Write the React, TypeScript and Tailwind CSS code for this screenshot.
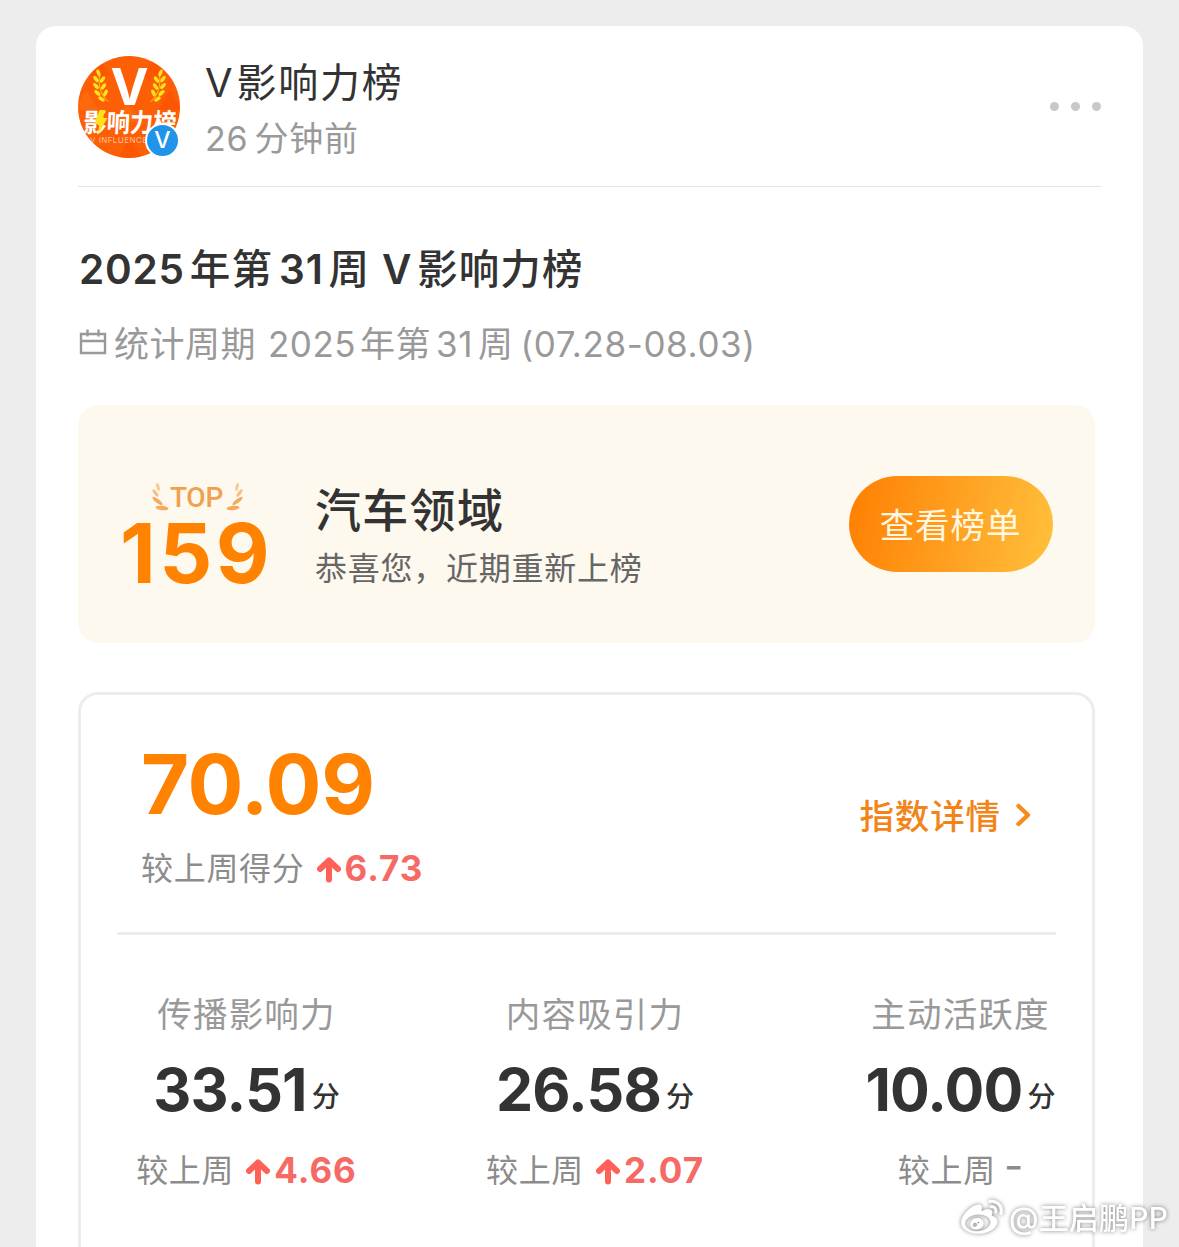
import React from 'react';
import { FaWeibo } from 'react-icons/fa6';

interface Metric {
  label: string;
  value: string;
  change: string | null;
  className: string;
}

const metrics: Metric[] = [
  { label: '传播影响力', value: '33.51', change: '4.66', className: 'w-[261px]' },
  { label: '内容吸引力', value: '26.58', change: '2.07', className: 'w-[436px]' },
  { label: '主动活跃度', value: '10.00', change: null, className: 'w-[295px]' },
];

const leaves = [
  [4, 2, 70],
  [1.5, 8, 55],
  [8, 8.5, 125],
  [1.5, 15, 48],
  [9, 15.5, 125],
  [3, 22, 40],
  [11, 22, 115],
  [7, 28, 35],
];

const Wheat: React.FC<{ transform: string }> = ({ transform }) => (
  <g transform={transform} fill="#ffe21a">
    {leaves.map(([x, y, angle]) => (
      <ellipse key={`${x}-${y}`} cx={x} cy={y} rx="3.7" ry="1.8" transform={`rotate(${angle} ${x} ${y})`} />
    ))}
    <path d="M5 4C3.500 14 6 24 14 31" fill="none" stroke="#ffe21a" strokeWidth="0.8" />
  </g>
);

const Avatar: React.FC = () => (
  <div className="relative h-[102px] w-[102px] shrink-0">
    <svg viewBox="0 0 102 102" className="h-full w-full">
      <defs>
        <clipPath id="avatar">
          <circle cx="51" cy="51" r="51" />
        </clipPath>
      </defs>
      <g clipPath="url(#avatar)">
        <rect width="102" height="102" fill="#fc5f05" />
        <path d="M20 0l12 20H8zM76 2l12 20H64zM92 34l12 20H80zM52 82l12 20H40z" fill="#ff4b00" opacity="0.45" />
        <path d="M8 34l12 20H-4zM50 48l12 18H38z" fill="#ff7a1c" opacity="0.4" />
        <Wheat transform="translate(16.5 15)" />
        <Wheat transform="translate(86.5 15) scale(-1 1)" />
        <text x="51.500" y="49" textAnchor="middle" className="fill-white font-['Inter'] text-[51px] font-bold">V</text>
        <text
          transform="translate(5 76) skewX(-3)"
          textLength="93"
          lengthAdjust="spacingAndGlyphs"
          className="fill-white font-['Noto_Sans_CJK_SC',sans-serif] text-[26px] font-bold"
        >
          影响力榜
        </text>
        <path d="M21.500 54l6 0-2.500 8 4.500 0-10 17 2-11-5 0z" fill="#ffe21a" />
        <text x="12" y="87" textLength="57" className="fill-[#ffc09a] font-['Inter'] text-[8px]">V INFLUENCE</text>
      </g>
    </svg>
    <div className="absolute top-[67px] left-[67px] flex h-[35px] w-[35px] items-center justify-center rounded-full border-2 border-white bg-[#1f94e8]">
      <span className="font-['Inter'] text-[23px] leading-none font-medium text-white">V</span>
    </div>
  </div>
);

const Laurel: React.FC<{ className?: string }> = ({ className }) => (
  <svg viewBox="0 0 17 28" className={`h-[28px] w-[17px] ${className || ''}`} fill="#f5ab5c">
    <ellipse cx="6" cy="4" rx="4" ry="1.600" transform="rotate(75 6 4)" opacity="0.6" />
    <ellipse cx="3.500" cy="10" rx="4.300" ry="1.700" transform="rotate(52 3.500 10)" opacity="0.75" />
    <ellipse cx="5.500" cy="18" rx="6.200" ry="2" transform="rotate(38 5.500 18)" />
    <ellipse cx="10" cy="25" rx="6.500" ry="2.200" transform="rotate(6 10 25)" />
  </svg>
);

const Rise: React.FC<{ value: string }> = ({ value }) => (
  <span className="flex items-center font-bold text-[#f56a65]">
    <svg viewBox="0 0 26 27" className="mt-[3px] mr-[3px] h-[27px] w-[26px]" fill="none" stroke="#ff6159" strokeWidth="6" strokeLinecap="round" strokeLinejoin="round">
      <path d="M13 23.500V5M4 13L13 4.500l9 8.500" />
    </svg>
    <span className="text-[35px] tracking-[1px]">{value}</span>
  </span>
);

const MetricColumn: React.FC<{ metric: Metric }> = ({ metric }) => (
  <div className={`flex shrink-0 flex-col items-center ${metric.className}`}>
    <div className="h-[50px] text-[34.5px] leading-[50px] tracking-[1.2px] text-[#999]">{metric.label}</div>
    <div className="mt-[15px] flex h-[70px] items-center text-[#333]">
      <span className="text-[59px] leading-[70px] font-bold tracking-[-0.8px]">{metric.value}</span>
      <span className="mt-[13px] ml-[5px] text-[28px] leading-[40px] font-medium">分</span>
    </div>
    <div className="mt-[21px] flex h-[50px] items-center leading-[50px] text-[#8c8c8c]">
      <span className="text-[32px] tracking-[0.7px]">较上周</span>
      {metric.change ? (
        <span className="mt-[-2px] ml-[11px]">
          <Rise value={metric.change} />
        </span>
      ) : (
        <span className="mt-[-11px] ml-[8px] text-[42px]">-</span>
      )}
    </div>
  </div>
);

const App: React.FC = () => {
  return (
    <div className="relative h-[1247px] w-[1179px] overflow-hidden bg-[#ededed] pt-[26px] font-['Inter','Noto_Sans_CJK_SC',sans-serif]">
      <div className="mx-[36px] h-[1260px] rounded-[20px] bg-white pl-[42px]">
        <div className="flex h-[161px] w-[1023px] border-b border-[#e4e4e4] pt-[30px]">
          <Avatar />
          <div className="ml-[25px] flex-1">
            <div className="mt-[1px] text-[40px] leading-[52px] tracking-[1.8px] text-[#333]">
              V<span className="ml-[2px]">影响力榜</span>
            </div>
            <div className="mt-[4px] text-[34px] leading-[52px] tracking-[0.8px] text-[#999]">
              26<span className="ml-[6px]">分钟前</span>
            </div>
          </div>
          <div className="mt-[46px] flex gap-[12px]">
            <span className="h-[9px] w-[9px] rounded-full bg-[#c8c8c8]" />
            <span className="h-[9px] w-[9px] rounded-full bg-[#c8c8c8]" />
            <span className="h-[9px] w-[9px] rounded-full bg-[#c8c8c8]" />
          </div>
        </div>

        <div className="mt-[53px] h-[60px] pl-[1px] text-[40.5px] leading-[60px] font-semibold tracking-[0.8px] whitespace-nowrap text-[#333]">
          2025<span className="ml-[5px] font-medium tracking-[1.1px]">年第</span>
          <span className="ml-[6px]">31</span>
          <span className="ml-[5px] font-medium">周</span>
          <span className="ml-[12px]">V</span>
          <span className="ml-[5px] font-medium tracking-[1.1px]">影响力榜</span>
        </div>

        <div className="mt-[19px] flex h-[50px] text-[35px] leading-[50px] tracking-[0.5px] whitespace-nowrap text-[#999]">
          <svg viewBox="0 0 28 28" className="mt-[9px] mr-[7px] ml-[1px] h-[28px] w-[28px]" fill="none" stroke="#999" strokeWidth="2.4">
            <path d="M2 6h24v19H2zM2 13h24M8.500 1.500v7M19.500 1.500v7" />
          </svg>
          <span>统计周期</span>
          <span className="ml-[12px]">2025</span>
          <span className="ml-[4px]">年第</span>
          <span className="ml-[5px]">31</span>
          <span className="ml-[5px]">周</span>
          <span className="ml-[7px] tracking-[0.6px]">(07.28-08.03)</span>
        </div>

        <div className="mt-[36px] flex h-[238px] w-[1017px] rounded-[20px] bg-[#fef9ee]">
          <div className="ml-[36px] w-[162px] pt-[76px]">
            <div className="flex h-[28px] items-center justify-center pt-[4px] pl-[5px]">
              <Laurel />
              <span className="mt-[1px] mr-[3px] ml-[1px] font-['Roboto'] text-[28px] leading-[28px] font-medium tracking-[-0.2px] text-[#f2a04c]">TOP</span>
              <Laurel className="-scale-x-100" />
            </div>
            <div className="mt-[12px] pl-[3px] text-center text-[83px] leading-[64px] font-bold tracking-[3.5px] text-[#ff8200]">159</div>
          </div>
          <div className="ml-[39px] flex-1 pt-[75px]">
            <div className="text-[46px] leading-[60px] font-medium tracking-[1.3px] text-[#333]">汽车领域</div>
            <div className="mt-[4px] text-[32px] leading-[50px] tracking-[0.75px] text-[#666]">恭喜您，近期重新上榜</div>
          </div>
          <button className="mt-[71px] mr-[42px] h-[96px] w-[204px] rounded-full bg-linear-[100deg,#ff8204_5%,#ff9f20_50%,#ffbf3a_98%] pt-[3px] pr-[1px] text-[34.5px] tracking-[0.9px] text-[#fff7e0]">
            查看榜单
          </button>
        </div>

        <div className="mt-[49px] h-[620px] w-[1017px] rounded-[20px] border-3 border-[#ededed]">
          <div className="mx-[36px] flex h-[240px] justify-between border-b-3 border-[#ededed]">
            <div className="ml-[24px] pt-[49px]">
              <div className="text-[83px] leading-[80px] font-bold tracking-[-0.4px] text-[#ff8200]">70.09</div>
              <div className="mt-[20px] flex h-[50px] items-center leading-[50px]">
                <span className="mr-[11px] text-[32px] tracking-[0.7px] text-[#8c8c8c]">较上周得分</span>
                <span className="mt-[-3px]">
                  <Rise value="6.73" />
                </span>
              </div>
            </div>
            <div className="mt-[97px] mr-[24px] flex h-[50px] items-center text-[34.5px] leading-[50px] font-medium tracking-[0.9px] text-[#f28519]">
              指数详情
              <svg viewBox="0 0 17 26" className="mt-[-4px] ml-[14px] h-[26px] w-[17px]" fill="none" stroke="#f98a1c" strokeWidth="4.4" strokeLinecap="round" strokeLinejoin="round">
                <path d="M3.500 4l9.500 9-9.500 9" />
              </svg>
            </div>
          </div>
          <div className="flex pt-[55px] pl-[35px]">
            {metrics.map((metric) => (
              <MetricColumn key={metric.label} metric={metric} />
            ))}
          </div>
        </div>
      </div>

      <div className="absolute top-[1195px] left-[961px] flex h-[46px] items-center whitespace-nowrap text-white drop-shadow-[0_0_2px_rgba(0,0,0,0.5)]">
        <FaWeibo className="h-[42px] w-[42px]" />
        <span className="ml-[6px] text-[30px] leading-[46px] font-medium tracking-[0.2px]">@王启鹏PP</span>
      </div>
    </div>
  );
};

export default App;
